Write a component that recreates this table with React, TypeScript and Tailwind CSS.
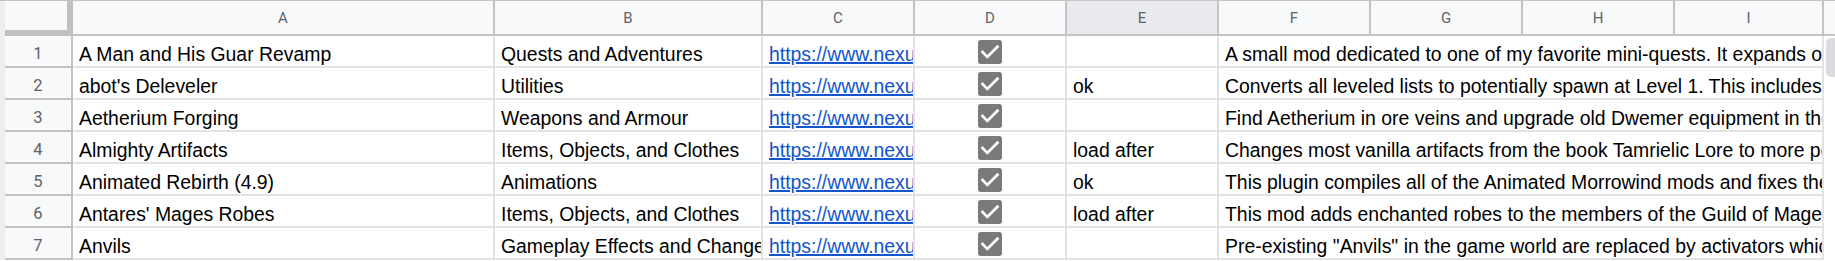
import React from "react";

type Row = { a: string; b: string; e: string; f: string };

const rows: Row[] = [
  { a: "A Man and His Guar Revamp", b: "Quests and Adventures", e: "", f: "A small mod dedicated to one of my favorite mini-quests. It expands on the quest and adds new dialogue." },
  { a: "abot's Deleveler", b: "Utilities", e: "ok", f: "Converts all leveled lists to potentially spawn at Level 1. This includes all creatures and items." },
  { a: "Aetherium Forging", b: "Weapons and Armour", e: "", f: "Find Aetherium in ore veins and upgrade old Dwemer equipment in the forge." },
  { a: "Almighty Artifacts", b: "Items, Objects, and Clothes", e: "load after", f: "Changes most vanilla artifacts from the book Tamrielic Lore to more powerful versions." },
  { a: "Animated Rebirth (4.9)", b: "Animations", e: "ok", f: "This plugin compiles all of the Animated Morrowind mods and fixes their issues." },
  { a: "Antares' Mages Robes", b: "Items, Objects, and Clothes", e: "load after", f: "This mod adds enchanted robes to the members of the Guild of Mages." },
  { a: "Anvils", b: "Gameplay Effects and Changes", e: "", f: "Pre-existing \"Anvils\" in the game world are replaced by activators which allow repairs." },
];

const cols = ["A", "B", "C", "D", "E", "F", "G", "H", "I"];

function CheckBox() {
  return (
    <svg width="24" height="24" viewBox="3 3 18 18" className="block">
      <path
        fill="#7a7a7a"
        d="M19 3H5c-1.11 0-2 .9-2 2v14c0 1.1.89 2 2 2h14c1.11 0 2-.9 2-2V5c0-1.1-.89-2-2-2z"
      />
      <path fill="#ffffff" d="M10 17l-5-5 1.41-1.41L10 14.17l7.59-7.59L19 8l-9 9z" />
    </svg>
  );
}

const cell =
  "border-r-2 border-b-2 border-[#e2e3e3] bg-white overflow-hidden flex items-end pl-[6px] pb-[2px] leading-[20px] text-[19.4px] text-black";

export default function App() {
  return (
    <div
      className="w-[1835px] h-[261px] bg-white overflow-hidden"
      style={{ fontFamily: '"Liberation Sans", Arial, sans-serif' }}
    >
      <div className="grid grid-cols-[5px_68px_422px_268px_152px_152px_152px_152px_152px_152px_149px_11px] grid-rows-[36px_repeat(7,32px)]">
        {/* left strip */}
        <div className="row-span-8 bg-[#eeeeee] border-t border-[#c0c0c0]" />
        {/* corner */}
        <div className="bg-[#f8f9fa] border-t border-r-[6px] border-b-[6px] border-[#c0c0c0]" />
        {/* column headers */}
        {cols.map((c) => (
          <div
            key={c}
            className={`${c === "E" ? "bg-[#e8eaed]" : "bg-[#f8f9fa]"} border-t border-r-2 border-b-2 border-[#c4c4c4] flex items-center justify-center pt-[2px] text-[15px] text-[#5f6368]`}
            style={{ fontFamily: 'Roboto, "Liberation Sans", sans-serif' }}
          >
            {c}
          </div>
        ))}
        <div className="bg-[#f8f9fa] border-t border-b-2 border-[#c4c4c4]" />

        {rows.map((r, i) => (
          <React.Fragment key={i}>
            <div
              className="bg-[#f8f9fa] border-r-2 border-b-2 border-[#c4c4c4] flex items-end justify-center pb-[4px] leading-[16px] text-[16.5px] text-[#5f6368]"
              style={{ fontFamily: 'Roboto, "Liberation Sans", sans-serif' }}
            >
              {i + 1}
            </div>
            <div className={cell}>
              <span className="whitespace-nowrap">{r.a}</span>
            </div>
            <div className={cell}>
              <span className="whitespace-nowrap">{r.b}</span>
            </div>
            <div className={cell}>
              <span className="whitespace-nowrap text-[#1155cc] underline decoration-2 underline-offset-1">
                https://www.nexusmods.com/morrowind/mods/4{i}812
              </span>
            </div>
            <div className="border-r-2 border-b-2 border-[#e2e3e3] bg-white flex items-center justify-center pt-[2px]">
              <CheckBox />
            </div>
            <div className={cell}>
              <span className="whitespace-nowrap">{r.e}</span>
            </div>
            <div className={`${cell} col-span-4`}>
              <span className="whitespace-nowrap">{r.f}</span>
            </div>
            {i === 0 ? (
              <div className="row-span-7 bg-white pt-[2px] flex justify-end">
                <div className="w-[9px] h-[39px] bg-[#dadce0] rounded-l-[5px]" />
              </div>
            ) : null}
          </React.Fragment>
        ))}
      </div>
    </div>
  );
}
